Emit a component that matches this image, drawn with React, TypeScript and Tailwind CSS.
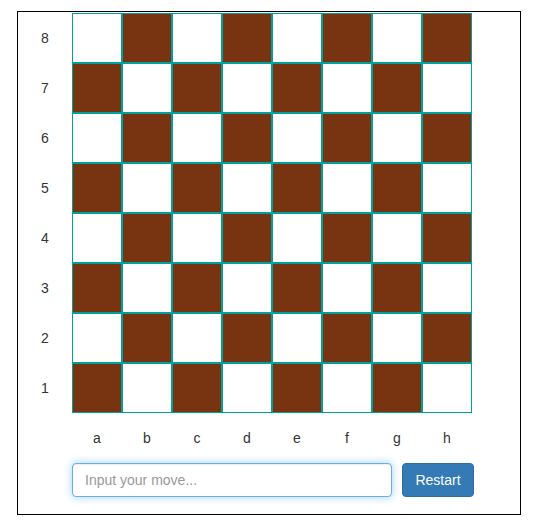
import React from "react";

const files = ["a", "b", "c", "d", "e", "f", "g", "h"];
const ranks = [8, 7, 6, 5, 4, 3, 2, 1];

export default function App() {
  return (
    <div className="pl-[17px] pt-[11px] font-['Liberation_Sans',Arial,sans-serif] text-[14px] text-[#333]">
      <div className="w-[504px] border border-black pt-px pb-[17px]">
        <div className="flex">
          <div className="w-[54px] flex flex-col">
            {ranks.map((r) => (
              <div key={r} className="h-[50px] flex items-center justify-center">
                {r}
              </div>
            ))}
          </div>
          <div className="grid grid-cols-[repeat(8,50px)]">
            {ranks.map((r, ri) =>
              files.map((f, fi) => (
                <div
                  key={f + r}
                  className={
                    (ri + fi) % 2 === 1
                      ? "w-[50px] h-[50px] border border-[#00a09c] bg-[#783410]"
                      : "w-[50px] h-[50px] border border-[#00a09c] bg-white"
                  }
                />
              ))
            )}
          </div>
        </div>
        <div className="flex ml-[54px]">
          {files.map((f) => (
            <div key={f} className="w-[50px] h-[50px] flex items-center justify-center">
              {f}
            </div>
          ))}
        </div>
        <div className="flex ml-[54px] gap-[10px]">
          <input
            autoFocus
            placeholder="Input your move..."
            className="w-[320px] h-[34px] px-[12px] py-[6px] rounded-[4px] border border-[#66afe9] outline-none shadow-[inset_0_1px_1px_rgba(0,0,0,0.075),0_0_8px_rgba(102,175,233,0.6)] placeholder:text-[#999] text-[14px] text-[#555] bg-white"
          />
          <button className="w-[72px] h-[34px] rounded-[4px] border border-[#2e6da4] bg-[#337ab7] text-white text-[14px]">
            Restart
          </button>
        </div>
      </div>
    </div>
  );
}
